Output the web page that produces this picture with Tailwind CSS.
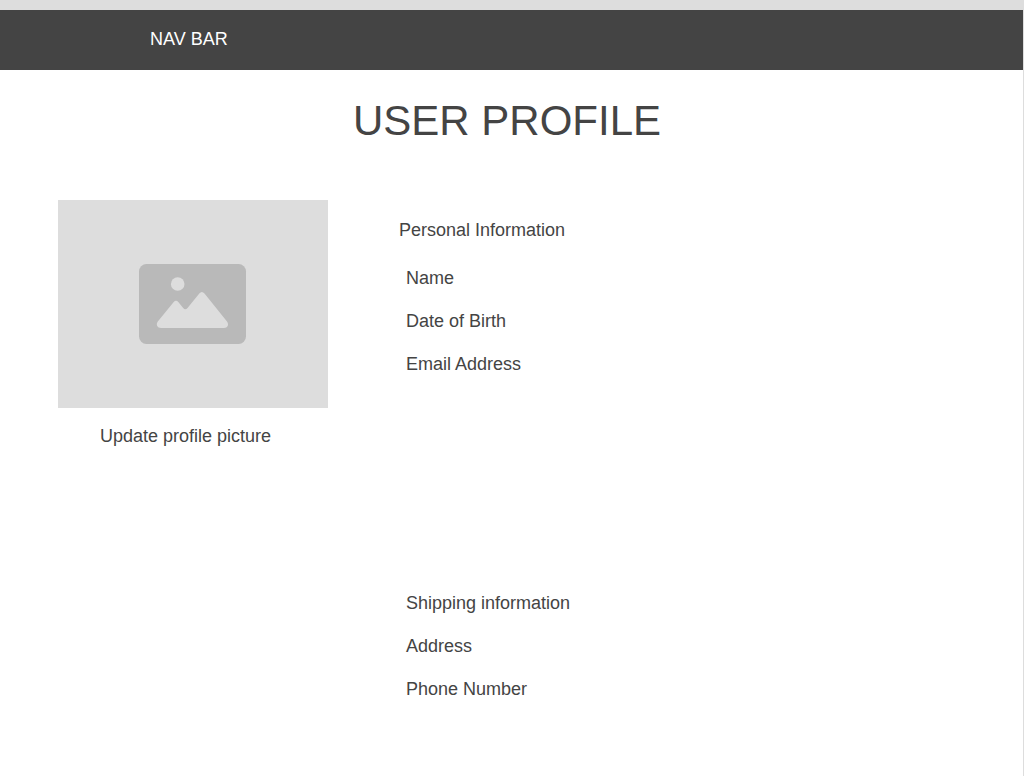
<!DOCTYPE html>
<html lang="en">
<head>
<meta charset="utf-8">
<title>User Profile</title>
<script src="https://cdn.jsdelivr.net/npm/@tailwindcss/browser@4"></script>
</head>
<body class="min-h-screen border-r border-[#dddddd] bg-white font-['Liberation_Sans',Arial,sans-serif] text-lg leading-5 text-[#444444]">
<div class="h-[10px] bg-[#dddddd]"></div>
<nav class="flex h-[60px] items-center bg-[#444444] px-[150px] pb-[2px] text-white">NAV BAR</nav>
<main class="pl-[58px] pr-[67px]">
  <h1 class="pt-[27px] text-center text-[42px] leading-[48px]">USER PROFILE</h1>
  <div class="flex items-start gap-[71px] pt-[55px]">
    <section class="w-[270px] shrink-0">
      <div class="flex h-[208px] items-center justify-center bg-[#dddddd]">
        <svg class="h-[80px] w-[108px]" viewBox="0 0 108 80" role="img" aria-label="Profile picture placeholder">
          <rect width="107" height="80" rx="7.500" fill="#b9b9b9"/>
          <circle cx="38.700" cy="20" r="6.800" fill="#dddddd"/>
          <path d="M18.800 57.500L34.500 38.200Q37 35.400 39.500 38.200L44.200 44Q46.300 46.500 48.500 44L60.300 29.500Q62.800 26.500 65.500 29.500L88 57.500C90.300 60.500 88.500 64 85 64H22C18.500 64 16.500 60.500 18.800 57.500Z" fill="#dddddd"/>
        </svg>
      </div>
      <button type="button" class="ml-[42px] mt-[18px] block">Update profile picture</button>
    </section>
    <div class="pt-5">
      <section>
        <h2>Personal Information</h2>
        <ul class="flex flex-col gap-[23px] pl-[7px] pt-[28px]">
          <li>Name</li>
          <li>Date of Birth</li>
          <li>Email Address</li>
        </ul>
      </section>
      <section class="flex flex-col gap-[23px] pl-[7px] pt-[219px]">
        <h2>Shipping information</h2>
        <ul class="flex flex-col gap-[23px]">
          <li>Address</li>
          <li>Phone Number</li>
        </ul>
      </section>
    </div>
  </div>
</main>
</body>
</html>
